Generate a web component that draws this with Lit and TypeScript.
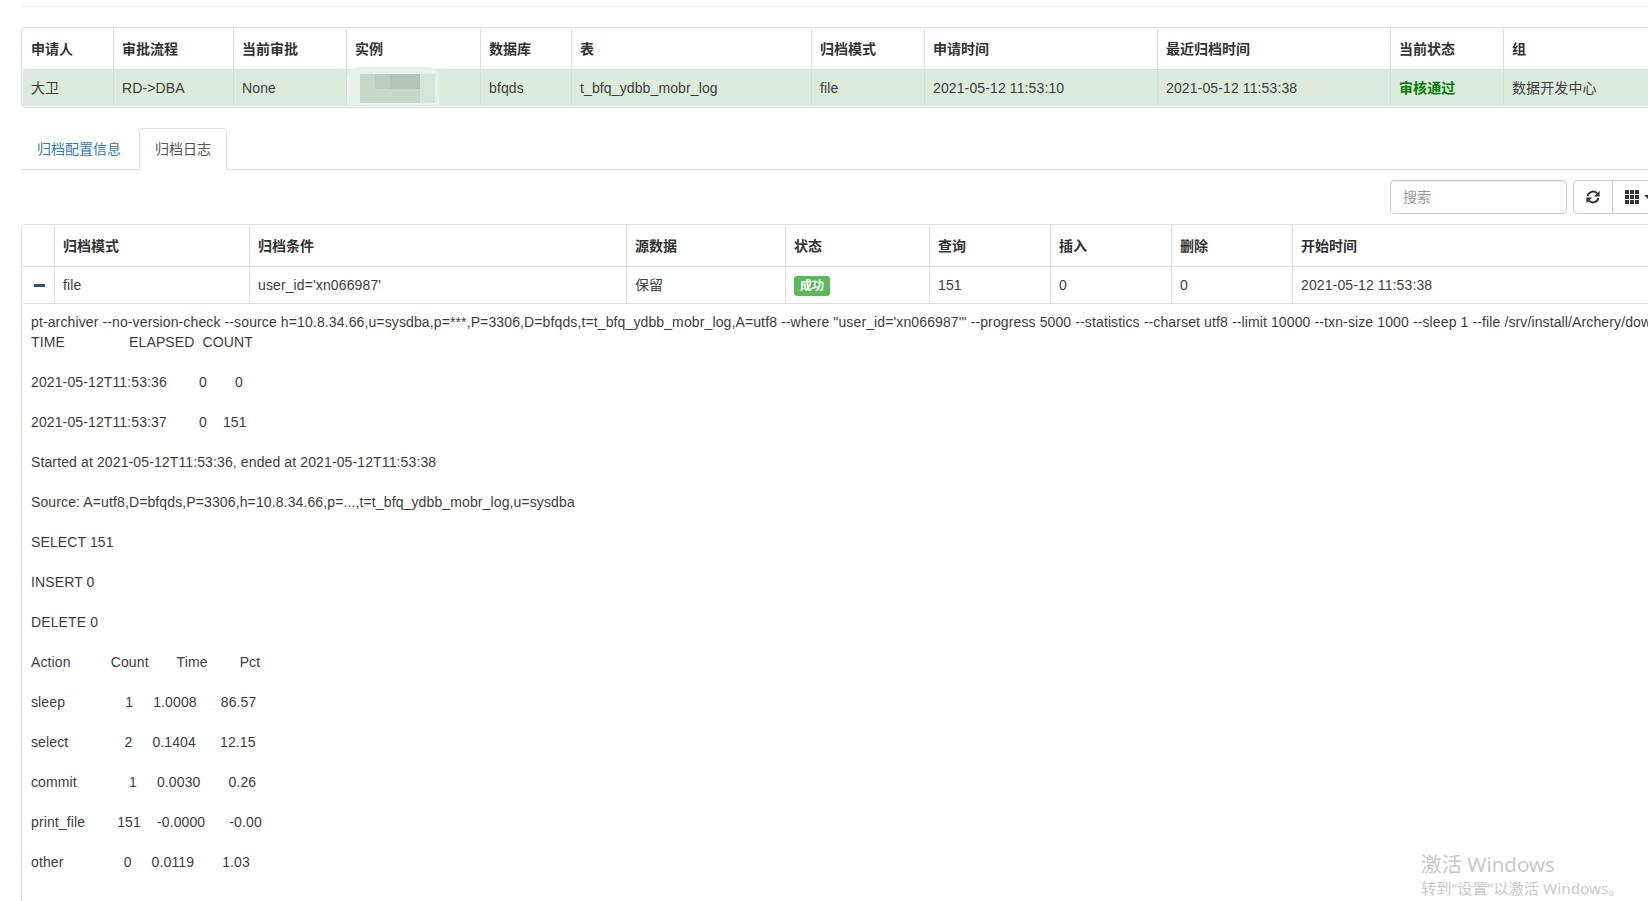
import { LitElement, html, css } from "lit";
import { customElement } from "lit/decorators.js";

const sp = (n: number) => " ".repeat(n);

const LOG = [
  `pt-archiver --no-version-check --source h=10.8.34.66,u=sysdba,p=***,P=3306,D=bfqds,t=t_bfq_ydbb_mobr_log,A=utf8 --where "user_id='xn066987'" --progress 5000 --statistics --charset utf8 --limit 10000 --txn-size 1000 --sleep 1 --file /srv/install/Archery/downloads/archiver/`,
  `TIME${sp(16)}ELAPSED${sp(2)}COUNT`,
  ``,
  `2021-05-12T11:53:36${sp(8)}0${sp(7)}0`,
  ``,
  `2021-05-12T11:53:37${sp(8)}0${sp(4)}151`,
  ``,
  `Started at 2021-05-12T11:53:36, ended at 2021-05-12T11:53:38`,
  ``,
  `Source: A=utf8,D=bfqds,P=3306,h=10.8.34.66,p=...,t=t_bfq_ydbb_mobr_log,u=sysdba`,
  ``,
  `SELECT 151`,
  ``,
  `INSERT 0`,
  ``,
  `DELETE 0`,
  ``,
  `Action${sp(10)}Count${sp(7)}Time${sp(8)}Pct`,
  ``,
  `sleep${sp(15)}1${sp(5)}1.0008${sp(6)}86.57`,
  ``,
  `select${sp(14)}2${sp(5)}0.1404${sp(6)}12.15`,
  ``,
  `commit${sp(13)}1${sp(5)}0.0030${sp(7)}0.26`,
  ``,
  `print_file${sp(8)}151${sp(4)}-0.0000${sp(6)}-0.00`,
  ``,
  `other${sp(15)}0${sp(5)}0.0119${sp(7)}1.03`,
].join("\n");

const T1_COLS = [90, 120, 113, 134, 91, 240, 113, 233, 233, 113];
const T1_HEAD = ["申请人", "审批流程", "当前审批", "实例", "数据库", "表", "归档模式", "申请时间", "最近归档时间", "当前状态", "组"];
const T2_COLS = [31, 195, 377, 159, 144, 121, 121, 121];
const T2_HEAD = ["", "归档模式", "归档条件", "源数据", "状态", "查询", "插入", "删除", "开始时间"];

@customElement("app-root")
export class AppRoot extends LitElement {
  static styles = css`
    :host {
      display: block;
      width: 100%;
      height: 901px;
      overflow: hidden;
      position: relative;
      background: #fff;
      color: #333;
      font: 14px/20px "Liberation Sans", "Noto Sans CJK SC", sans-serif;
    }
    .content {
      width: 1800px;
      margin-left: 21px;
      padding-top: 6px;
    }
    .rule {
      height: 1px;
      background: #eee;
      margin-bottom: 20px;
    }
    .wrap {
      border: 1px solid #ddd;
      border-radius: 4px 0 0 4px;
      padding: 1px;
    }
    table {
      border-collapse: separate;
      border-spacing: 0;
      table-layout: fixed;
      width: 100%;
    }
    th,
    td {
      padding: 0 8px;
      text-align: left;
      white-space: nowrap;
      overflow: visible;
      border-left: 1px solid #ddd;
      border-bottom: 1px solid #ddd;
    }
    td {
      color: #3d3d3d;
      letter-spacing: 0.12px;
    }
    th:first-child,
    td:first-child {
      border-left: 0;
    }
    th {
      height: 40px;
      font-weight: 700;
    }
    .t1 td {
      height: 36px;
      border-bottom: 0;
      background: #dcebdd;
      border-left-color: #d8dfd8;
    }
    .t2 td {
      height: 36px;
    }
    .inst {
      position: relative;
    }
    .mosaic {
      position: absolute;
      left: 0;
      top: -3px;
      width: 92px;
      height: 38px;
      background: #e9f2ea;
      border-radius: 10px 10px 2px 2px;
    }
    .m1,
    .m2,
    .m3 {
      position: absolute;
      top: 7px;
      left: 13px;
    }
    .m1 {
      width: 75px;
      height: 29px;
      background: #d6e4d9;
    }
    .m2 {
      width: 60px;
      height: 29px;
      background: #c9d7cb;
    }
    .m3 {
      left: 28px;
      width: 45px;
      height: 15px;
      background: linear-gradient(90deg, #bfcdc1 0 33%, #b6c4b8 33%);
    }
    .t1 td.ok {
      color: #008000;
      font-weight: 700;
    }
    .tabs {
      display: flex;
      margin: 20px 0 0;
      padding: 0;
      list-style: none;
      border-bottom: 1px solid #ddd;
    }
    .tab {
      margin: 0 2px -1px 0;
      padding: 10px 15px;
      border: 1px solid transparent;
      border-radius: 4px 4px 0 0;
      color: #337ab7;
    }
    .tab.active {
      color: #555;
      background: #fff;
      border-color: #ddd #ddd #fff;
    }
    .toolbar {
      display: flex;
      justify-content: flex-end;
      gap: 6px;
      margin: 10px 0;
      padding-right: 156px;
    }
    .search {
      width: 177px;
      height: 34px;
      box-sizing: border-box;
      padding: 6px 12px;
      border: 1px solid #ccc;
      border-radius: 4px;
      box-shadow: inset 0 1px 1px rgba(0, 0, 0, 0.075);
      font: inherit;
      color: #555;
      outline: 0;
    }
    .search::placeholder {
      color: #999;
    }
    .group {
      display: flex;
    }
    .btn {
      display: flex;
      flex: none;
      align-items: center;
      justify-content: center;
      gap: 5px;
      height: 34px;
      box-sizing: border-box;
      padding: 0 12px;
      border: 1px solid #ccc;
      background: #fff;
      color: #333;
    }
    .btn svg {
      flex: none;
      display: block;
    }
    .btn.first {
      width: 40px;
      border-radius: 4px 0 0 4px;
    }
    .btn.last {
      margin-left: -1px;
      border-radius: 0 4px 4px 0;
    }
    .caret {
      width: 0;
      height: 0;
      border-top: 4px solid #333;
      border-left: 4px solid transparent;
      border-right: 4px solid transparent;
    }
    .toggle {
      display: block;
      width: 11px;
      height: 3px;
      margin-left: 3px;
      background: #2a5082;
    }
    .label {
      display: inline-block;
      padding: 2px 6px 1px;
      border-radius: 3px;
      background: #5cb85c;
      color: #fff;
      font-size: 12px;
      line-height: 17px;
      font-weight: 700;
      vertical-align: middle;
    }
    .t2 td.log {
      height: auto;
      padding: 8px 8px 60px;
      border-bottom: 0;
      line-height: 20px;
      white-space: pre;
    }
    .wm {
      position: absolute;
      left: 1421px;
      top: 850px;
      color: #c9c9c9;
      font-family: "Noto Sans", "Noto Sans CJK SC", sans-serif;
      font-weight: 400;
      white-space: nowrap;
      pointer-events: none;
    }
    .wm1 {
      font-size: 20.5px;
      line-height: 28px;
    }
    .wm2 {
      font-size: 15.3px;
      line-height: 20px;
    }
  `;

  private colgroup(cols: number[]) {
    return html`<colgroup>
      ${cols.map((w) => html`<col style="width:${w}px" />`)}
      <col />
    </colgroup>`;
  }

  render() {
    return html`
      <div class="content">
        <div class="rule"></div>

        <div class="wrap">
          <table class="t1">
            ${this.colgroup(T1_COLS)}
            <thead>
              <tr>${T1_HEAD.map((h) => html`<th>${h}</th>`)}</tr>
            </thead>
            <tbody>
              <tr>
                <td>大卫</td>
                <td>RD-&gt;DBA</td>
                <td>None</td>
                <td class="inst">
                  <div class="mosaic">
                    <div class="m1"></div>
                    <div class="m2"></div>
                    <div class="m3"></div>
                  </div>
                </td>
                <td>bfqds</td>
                <td>t_bfq_ydbb_mobr_log</td>
                <td>file</td>
                <td>2021-05-12 11:53:10</td>
                <td>2021-05-12 11:53:38</td>
                <td class="ok">审核通过</td>
                <td>数据开发中心</td>
              </tr>
            </tbody>
          </table>
        </div>

        <ul class="tabs">
          <li class="tab">归档配置信息</li>
          <li class="tab active">归档日志</li>
        </ul>

        <div class="toolbar">
          <input class="search" placeholder="搜索" />
          <div class="group">
            <div class="btn first">
              <svg width="14" height="14" viewBox="0 0 14 14" fill="none">
                <path d="M1.6 6A5.5 5.5 0 0 1 11 3.4" stroke="#333" stroke-width="2" />
                <path d="M13.6 .8V6.6H7.8Z" fill="#333" />
                <path d="M12.4 8A5.5 5.5 0 0 1 3 10.6" stroke="#333" stroke-width="2" />
                <path d="M.4 13.2V7.4H6.2Z" fill="#333" />
              </svg>
            </div>
            <div class="btn last">
              <svg width="14" height="14" viewBox="0 0 14 14" fill="#333">
                <path d="M0 0h4v4H0zM5 0h4v4H5zM10 0h4v4h-4zM0 5h4v4H0zM5 5h4v4H5zM10 5h4v4h-4zM0 10h4v4H0zM5 10h4v4H5zM10 10h4v4h-4z" />
              </svg>
              <span class="caret"></span>
            </div>
          </div>
        </div>

        <div class="wrap">
          <table class="t2">
            ${this.colgroup(T2_COLS)}
            <thead>
              <tr>${T2_HEAD.map((h) => html`<th>${h}</th>`)}</tr>
            </thead>
            <tbody>
              <tr>
                <td><span class="toggle"></span></td>
                <td>file</td>
                <td>user_id='xn066987'</td>
                <td>保留</td>
                <td><span class="label">成功</span></td>
                <td>151</td>
                <td>0</td>
                <td>0</td>
                <td>2021-05-12 11:53:38</td>
              </tr>
              <tr>
                <td class="log" colspan="9">${LOG}</td>
              </tr>
            </tbody>
          </table>
        </div>
      </div>

      <div class="wm">
        <div class="wm1">激活 Windows</div>
        <div class="wm2">转到“设置”以激活 Windows。</div>
      </div>
    `;
  }
}
